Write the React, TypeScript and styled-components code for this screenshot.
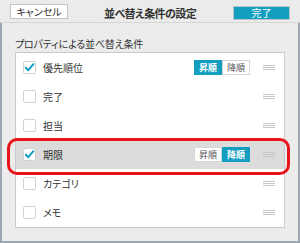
import React from "react";
import styled, { createGlobalStyle } from "styled-components";

const GlobalStyle = createGlobalStyle`
	html, body {
		margin: 0;
		padding: 0;
		background: #ececec;
	}
	body {
		font-family: "Noto Sans CJK JP", "Noto Sans", sans-serif;
		font-feature-settings: "palt";
		color: #333333;
	}
`;

const TEAL = "#139dbf";

const Dialog = styled.div`
	position: relative;
	width: 300px;
	height: 243px;
	display: flex;
	flex-direction: column;
	background: #ececec;
	overflow: hidden;
`;

const Header = styled.div`
	height: 22px;
	display: grid;
	grid-template-columns: 1fr auto 1fr;
	align-items: center;
	padding: 0 10px;
	border-bottom: 1px solid #d6d6d6;
	background: #ebebeb;
`;

const HeaderButton = styled.div<{ $primary?: boolean }>`
	width: ${(p) => (p.$primary ? "55px" : "56px")};
	height: ${(p) => (p.$primary ? "12px" : "13px")};
	margin-top: ${(p) => (p.$primary ? "3px" : "1px")};
	justify-self: ${(p) => (p.$primary ? "end" : "start")};
	display: flex;
	align-items: center;
	justify-content: center;
	border: 1px solid ${(p) => (p.$primary ? "#b9c4c8" : "#c4c4c4")};
	background: ${(p) => (p.$primary ? TEAL : "#ffffff")};
	color: ${(p) => (p.$primary ? "#ffffff" : "#333333")};
	font-size: 10px;
	line-height: 1;
`;

const Title = styled.div`
	font-size: 11px;
	font-weight: bold;
	letter-spacing: -0.6px;
	color: #333333;
	margin-top: 3px;
`;

const Body = styled.div`
	flex: 1;
	display: flex;
	flex-direction: column;
	padding: 14px 13px 13px;
	border: 2px solid #9ca7b1;
	border-top: none;
`;

const SectionLabel = styled.div`
	font-size: 10px;
	line-height: 14px;
	height: 15px;
	color: #333333;
	letter-spacing: -0.2px;
`;

const Panel = styled.div`
	background: #ffffff;
	border: 1px solid #c9c9c9;
	display: flex;
	flex-direction: column;
`;

const Row = styled.div<{ $active?: boolean }>`
	height: 29px;
	display: flex;
	align-items: center;
	padding: 0 9px 0 7px;
	background: ${(p) => (p.$active ? "#dcdcdc" : "transparent")};
`;

const Check = styled.div`
	width: 13px;
	height: 13px;
	box-sizing: border-box;
	border: 1px solid #d2d2d2;
	border-radius: 2px;
	background: #ffffff;
	display: flex;
	align-items: center;
	justify-content: center;
`;

const Label = styled.div`
	margin-left: 7px;
	font-size: 10px;
	color: #333333;
`;

const Segmented = styled.div`
	margin-left: auto;
	display: flex;
	height: 15px;
`;

const Segment = styled.div<{ $on?: boolean }>`
	width: 28px;
	box-sizing: border-box;
	display: flex;
	align-items: center;
	justify-content: center;
	font-size: 9px;
	font-weight: ${(p) => (p.$on ? "bold" : "normal")};
	background: ${(p) => (p.$on ? TEAL : "#ffffff")};
	color: ${(p) => (p.$on ? "#ffffff" : "#555555")};
	border: 1px solid ${(p) => (p.$on ? TEAL : "#d6d6d6")};
`;

const Handle = styled.div<{ $alone?: boolean }>`
	margin-left: ${(p) => (p.$alone ? "auto" : "13px")};
	width: 12px;
	height: 5px;
	background: repeating-linear-gradient(
		to bottom,
		#c6c6c6 0px,
		#c6c6c6 1px,
		transparent 1px,
		transparent 2px
	);
`;

const Highlight = styled.div`
	position: absolute;
	left: 7px;
	top: 138px;
	width: 277px;
	height: 31px;
	border: 3px solid #e8141c;
	border-radius: 10px;
	pointer-events: none;
`;

const CheckMark = () => (
	<svg width="11" height="11" viewBox="0 0 11 11">
		<polyline
			points="1.8,5.8 4.3,8.2 9.4,2.2"
			fill="none"
			stroke={TEAL}
			strokeWidth="2"
			strokeLinecap="round"
			strokeLinejoin="round"
		/>
	</svg>
);

type Item = {
	name: string;
	checked: boolean;
	order?: "asc" | "desc";
	active?: boolean;
};

const items: Item[] = [
	{ name: "優先順位", checked: true, order: "asc" },
	{ name: "完了", checked: false },
	{ name: "担当", checked: false },
	{ name: "期限", checked: true, order: "desc", active: true },
	{ name: "カテゴリ", checked: false },
	{ name: "メモ", checked: false },
];

export default function App() {
	return (
		<>
			<GlobalStyle />
			<Dialog>
				<Header>
					<HeaderButton>キャンセル</HeaderButton>
					<Title>並べ替え条件の設定</Title>
					<HeaderButton $primary>完了</HeaderButton>
				</Header>
				<Body>
					<SectionLabel>プロパティによる並べ替え条件</SectionLabel>
					<Panel>
						{items.map((it) => (
							<Row key={it.name} $active={it.active}>
								<Check>{it.checked && <CheckMark />}</Check>
								<Label>{it.name}</Label>
								{it.order && (
									<Segmented>
										<Segment $on={it.order === "asc"}>昇順</Segment>
										<Segment $on={it.order === "desc"}>降順</Segment>
									</Segmented>
								)}
								<Handle $alone={!it.order} />
							</Row>
						))}
					</Panel>
				</Body>
				<Highlight />
			</Dialog>
		</>
	);
}
